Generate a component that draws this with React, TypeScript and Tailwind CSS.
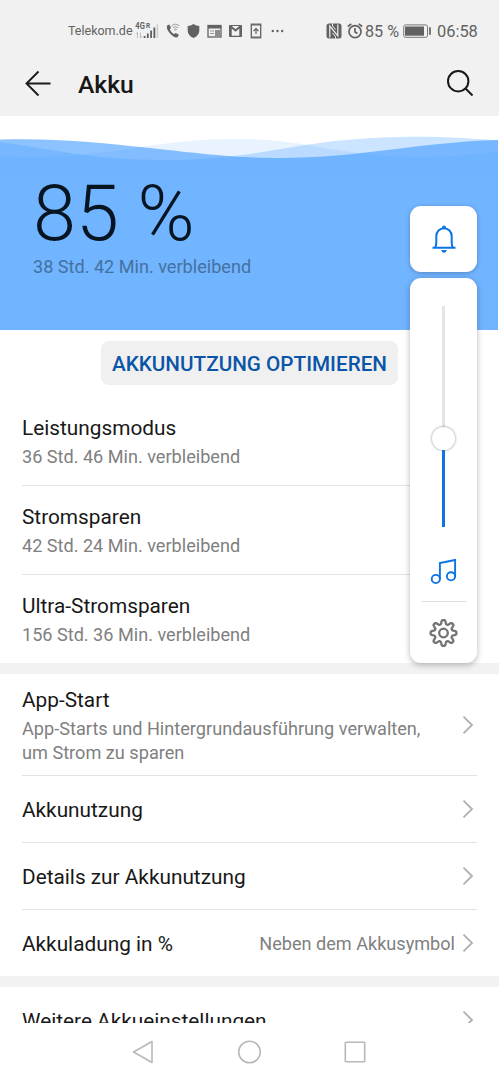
import type { ReactNode } from 'react'

interface PowerMode {
  name: string
  remaining: string
}

interface SettingRow {
  title: string
  value?: string
}

const modes: PowerMode[] = [
  { name: 'Leistungsmodus', remaining: '36 Std. 46 Min. verbleibend' },
  { name: 'Stromsparen', remaining: '42 Std. 24 Min. verbleibend' },
  { name: 'Ultra-Stromsparen', remaining: '156 Std. 36 Min. verbleibend' },
]

const settings: SettingRow[] = [
  { title: 'Akkunutzung' },
  { title: 'Details zur Akkunutzung' },
  { title: 'Akkuladung in %', value: 'Neben dem Akkusymbol' },
]

// Outline of the gear: eight soft teeth around the centre
const gearPath =
  Array.from({ length: 160 }, (_, i) => {
    const angle = (i / 160) * Math.PI * 2
    const wave = Math.max(-1, Math.min(1, 1.5 * Math.cos(angle * 8)))
    const r = 11 + 1.9 * wave
    return `${i === 0 ? 'M' : 'L'}${(14.5 + r * Math.cos(angle)).toFixed(2)} ${(15 + r * Math.sin(angle)).toFixed(2)}`
  }).join('') + 'Z'

function Chevron() {
  return (
    <svg className="w-3 h-5 shrink-0" viewBox="0 0 12 20" fill="none" stroke="#b0b0b0" strokeWidth={1.8}>
      <path d="M1.500 1.700L10 10L1.500 18.300" />
    </svg>
  )
}

function Divider() {
  return <div className="h-px bg-[#e2e2e2] mx-[22px] shrink-0" />
}

function Gap() {
  return <div className="h-[11px] bg-[#f2f2f2] shrink-0" />
}

function StatusBar() {
  return (
    <div className="h-[52px] pt-[10px] flex items-center text-[#626262]">
      <span className="ml-[68px] w-[66px] text-[12.5px] whitespace-nowrap">Telekom.de</span>
      <svg className="w-[26px] h-5" viewBox="0 0 26 20" fill="#626262">
        <text x="1.300" y="7.800" fontSize="8.500" fontWeight="700" textLength="9.500" lengthAdjust="spacingAndGlyphs" fontFamily="Roboto, sans-serif">4G</text>
        <text x="12" y="6.800" fontSize="6.500" fontWeight="700" fontFamily="Roboto, sans-serif">R</text>
        <path d="M3.500 17V11.500M2 13l1.500-1.500M6.500 11.500V17M8 15.500l-1.500 1.500" stroke="#bcbcbc" fill="none" />
        <path d="M9.700 15h1.800v2h-1.800zM12.900 12.500h1.800v4.500h-1.800zM16.200 9.500h1.800v7.500h-1.800zM19.400 6.500h1.900v10.500h-1.900z" />
        <path d="M22.500 3h1.700v14h-1.700z" fill="#d0d0d0" />
      </svg>
      <svg className="ml-[6px] w-[15px] h-5" viewBox="0 0 15 20" fill="none">
        <path d="M1 4.500L3.500 3.500L5 7L3.800 8.500Q5 11.500 8 13.200L9.500 12L12.800 13.600L11.800 16.100Q9 17.500 5 13.500Q0 8.500 1 4.500Z" fill="#626262" />
        <path d="M5.500 5Q9.500 1.300 13.500 5M7 6.700Q9.500 4.500 12 6.700M8.500 8.300L9.500 9.400L10.500 8.300Q9.500 7.500 8.500 8.300" stroke="#999" />
      </svg>
      <svg className="ml-[6px] w-[13px] h-5" viewBox="0 0 13 20" fill="#626262">
        <path d="M6.500 3Q9 5 12.300 5V10Q12 14.500 6.500 17Q1 14.500 .7 10V5Q4 5 6.500 3Z" />
      </svg>
      <svg className="ml-[7px] w-[15px] h-5" viewBox="0 0 15 20" fill="none">
        <rect x="1" y="4.500" width="13" height="11.500" stroke="#626262" strokeWidth="1.300" />
        <path d="M1 4h13v3.500H1z" fill="#626262" />
        <path d="M3 10h4M3 12.500h4" stroke="#999" />
        <path d="M8 9h5v6H8z" fill="#8b8b8b" />
      </svg>
      <svg className="ml-[6px] w-[15px] h-5" viewBox="0 0 15 20" fill="none">
        <rect x="1" y="4" width="13" height="12" rx=".8" fill="#626262" />
        <path d="M3.700 14.800V7.500L7.500 10.800L11.300 7.500V14.800Z" fill="#f1f1f1" />
        <path d="M3.700 5L7.500 8.300L11.300 5Z" fill="#f1f1f1" />
      </svg>
      <svg className="ml-[7px] w-[12px] h-5" viewBox="0 0 12 20" fill="none" stroke="#626262">
        <rect x="1.300" y="3.200" width="9.400" height="13.600" strokeWidth="1.300" />
        <path d="M1 4h10M1 16h10" strokeWidth="1.200" />
        <path d="M6 13V7.500M3.500 10L6 7.500L8.500 10" strokeWidth="1.200" />
      </svg>
      <svg className="ml-[9px] w-[13px] h-5" viewBox="0 0 13 20" fill="#626262">
        <circle cx="1.800" cy="10" r="1.200" />
        <circle cx="6.500" cy="10" r="1.200" />
        <circle cx="11.200" cy="10" r="1.200" />
      </svg>
      <svg className="ml-[42px] w-[16px] h-5" viewBox="0 0 16 20">
        <rect x=".5" y="2.500" width="15" height="15" rx="2.500" fill="#626262" />
        <path d="M3.800 16.500V5L11.800 14.800V3.500" fill="none" stroke="#f1f1f1" strokeWidth="1.200" />
        <path d="M6.500 2.500V5L9.500 8.500M6.500 12L9.500 15.500V17.500" fill="none" stroke="#f1f1f1" strokeWidth="1" />
      </svg>
      <svg className="ml-[5px] w-[16px] h-5" viewBox="0 0 16 20" fill="none" stroke="#626262" strokeWidth="1.700">
        <circle cx="8" cy="10.700" r="6" />
        <path d="M8 7V11L10.500 12.500M.8 5.500L4.300 2.800M15.200 5.500L11.700 2.800" />
      </svg>
      <span className="ml-[2px] w-[38px] pt-[2px] text-[16.2px] whitespace-nowrap">85 %</span>
      <svg className="w-[29px] h-5" viewBox="0 0 29 20" fill="none">
        <rect x=".7" y="3.900" width="23.800" height="12.400" rx="1.800" stroke="#777" />
        <rect x="2" y="5.500" width="19" height="9.200" fill="#626262" />
        <rect x="26" y="6.300" width="2" height="7.500" fill="#777" />
      </svg>
      <span className="ml-[5px] pt-[2px] text-[16.4px]">06:58</span>
    </div>
  )
}

function Header() {
  return (
    <div className="h-[62px] flex items-center pl-[25px] pr-[25px]">
      <svg className="w-[27px] h-[27px]" viewBox="0 0 27 27" fill="none" stroke="#1b1b1b" strokeWidth={1.900}>
        <path d="M13.500 1.500L1.500 13.500L13.500 25.500M1.500 13.500H25.500" />
      </svg>
      <h1 className="ml-[26px] pt-[3px] text-[24.700px] font-medium text-[#181818]">Akku</h1>
      <svg className="ml-auto w-7 h-7" viewBox="0 0 28 28" fill="none" stroke="#181818" strokeWidth={2}>
        <circle cx="12.200" cy="12.200" r="10.200" />
        <path d="M19.500 19.500L26.500 26.500" />
      </svg>
    </div>
  )
}

function BatteryHero() {
  return (
    <div className="mr-px shrink-0">
      <svg className="block w-[498px] h-[60px]" viewBox="0 0 498 60" fill="#409aff">
        <path fillOpacity=".12" d="M0 40C35 43 80 40 120 34C165 28 185 23 240 23C290 23 320 33 360 37C400 43 440 42 498 36V60H0Z" />
        <path fillOpacity=".27" d="M0 26C50 33 95 44 165 44C240 44 280 31 335 25C400 19 440 20 498 24.500V60H0Z" />
        <path fillOpacity=".6" d="M0 23.500C55 22 95 26 150 32C205 38 235 42 280 42C360 42 420 26 498 24V60H0Z" />
      </svg>
      <div className="h-[154px] bg-[#71b4ff] pl-[33px]">
        <div className="h-[78px] pt-px leading-[74px] text-[77.3px] font-light text-[#071522] whitespace-nowrap">85 %</div>
        <div className="leading-6 pt-[1px] text-[18.1px] text-[#43729f]">38 Std. 42 Min. verbleibend</div>
      </div>
    </div>
  )
}

function Row({ children }: { children: ReactNode }) {
  return <div className="h-[66px] shrink-0 pl-[22px] pr-[25px] flex items-center">{children}</div>
}

function VolumePanel() {
  return (
    <div className="absolute left-[410px] top-[206px] w-[67px] flex flex-col gap-[6px]">
      <div className="h-[66px] rounded-[11px] bg-white shadow-[0_1px_4px_rgba(0,0,0,0.25)] flex items-center justify-center">
        <svg className="w-6 h-7" viewBox="0 0 24 28" fill="none" stroke="#0c74e4" strokeWidth={2}>
          <path d="M.5 22.800H23.500M3 22.500Q4.300 21 4.300 18V11A7.700 7.700 0 0 1 19.700 11V18Q19.700 21 21 22.500" />
          <circle cx="12" cy="2.300" r="1.900" fill="#0c74e4" stroke="none" />
          <path d="M9.200 25H14.800Q14.200 27.800 12 27.800Q9.800 27.800 9.200 25Z" fill="#0c74e4" stroke="none" />
        </svg>
      </div>
      <div className="h-[385px] rounded-[11px] bg-white shadow-[0_2px_6px_rgba(0,0,0,0.28)] flex flex-col items-center pt-7">
        <div className="w-[3px] h-[121px] bg-[#e5e5e5]" />
        <div className="w-[23px] h-[23px] rounded-full bg-white shadow-[0_0_3px_rgba(0,0,0,0.45)]" />
        <div className="w-[3px] h-[77px] bg-[#0c74e4]" />
        <svg className="mt-[31px] w-[27px] h-[27px]" viewBox="0 0 27 27" fill="none" stroke="#0c74e4" strokeWidth={1.900}>
          <circle cx="5.800" cy="21" r="4.100" />
          <circle cx="21" cy="18.300" r="4.100" />
          <path d="M9.900 21V5L25.100 2V18.300" />
        </svg>
        <div className="mt-[16px] w-11 h-px bg-[#dedede]" />
        <svg className="mt-[16px] w-[30px] h-[30px]" viewBox="0 0 30 30" fill="none" stroke="#737373" strokeWidth={2.300}>
          <path d={gearPath} strokeLinejoin="round" />
          <circle cx="14.500" cy="15" r="4.300" />
        </svg>
      </div>
    </div>
  )
}

export default function App() {
  return (
    <div className="relative w-[499px] h-[1080px] overflow-hidden bg-white flex flex-col font-['Roboto',sans-serif]">
      <div className="h-[116px] shrink-0 bg-[#f1f1f1]">
        <StatusBar />
        <Header />
      </div>

      <main className="h-[907px] shrink-0 overflow-hidden flex flex-col">
        <BatteryHero />

        <div className="h-[66px] shrink-0 pt-[11px] pl-[101px]">
          <button className="block w-[297px] h-[44px] pt-[3px] rounded-lg bg-[#f0f0f0] text-[20.7px] font-medium text-[#0b55a8] whitespace-nowrap">
            AKKUNUTZUNG OPTIMIEREN
          </button>
        </div>

        {modes.map((mode, index) => (
          <div key={mode.name} className="shrink-0">
            {index > 0 && <Divider />}
            <div className={index === 0 ? 'h-[89px] pl-[22px] pt-[18px]' : 'h-[88px] pl-[22px] pt-[17px]'}>
              <div className="text-[20.8px] leading-7 text-[#181818]">{mode.name}</div>
              <div className="mt-[3px] text-[18.1px] leading-6 text-[#808080]">{mode.remaining}</div>
            </div>
          </div>
        ))}

        <Gap />

        <div className="h-[101px] shrink-0 pl-[22px] pr-[25px] flex items-center">
          <div className="flex-1 pt-[2px]">
            <div className="text-[20.8px] leading-7 text-[#181818]">App-Start</div>
            <div className="mt-[3px] text-[18.15px] leading-[24px] text-[#808080] whitespace-nowrap">
              App-Starts und Hintergrundausführung verwalten,
              <br />
              um Strom zu sparen
            </div>
          </div>
          <Chevron />
        </div>

        {settings.map((item) => (
          <div key={item.title} className="shrink-0">
            <Divider />
            <Row>
              <span className="flex-1 pt-[3px] text-[20.8px] text-[#181818]">{item.title}</span>
              {item.value && <span className="mr-[7px] pt-px text-[18.1px] text-[#808080]">{item.value}</span>}
              <Chevron />
            </Row>
          </div>
        ))}

        <Gap />

        <Row>
          <span className="flex-1 pt-[3px] text-[20.8px] text-[#181818]">Weitere Akkueinstellungen</span>
          <Chevron />
        </Row>
      </main>

      {/* Navigation bar */}
      <nav className="flex-1 pr-[2px] bg-white flex items-center justify-center gap-[83px]">
        <svg className="w-[22px] h-6" viewBox="0 0 22 24" fill="none" stroke="#b8b8b8" strokeWidth={1.600} strokeLinejoin="round">
          <path d="M20 1.500V22.500L1.500 12Z" />
        </svg>
        <svg className="w-6 h-6" viewBox="0 0 24 24" fill="none" stroke="#b8b8b8" strokeWidth={1.600}>
          <circle cx="12.500" cy="12" r="10.800" />
        </svg>
        <svg className="w-[22px] h-[22px]" viewBox="0 0 22 22" fill="none" stroke="#b8b8b8" strokeWidth={1.600}>
          <rect x="1.300" y="1.300" width="19.400" height="19.400" rx=".5" />
        </svg>
      </nav>

      <VolumePanel />
    </div>
  )
}
